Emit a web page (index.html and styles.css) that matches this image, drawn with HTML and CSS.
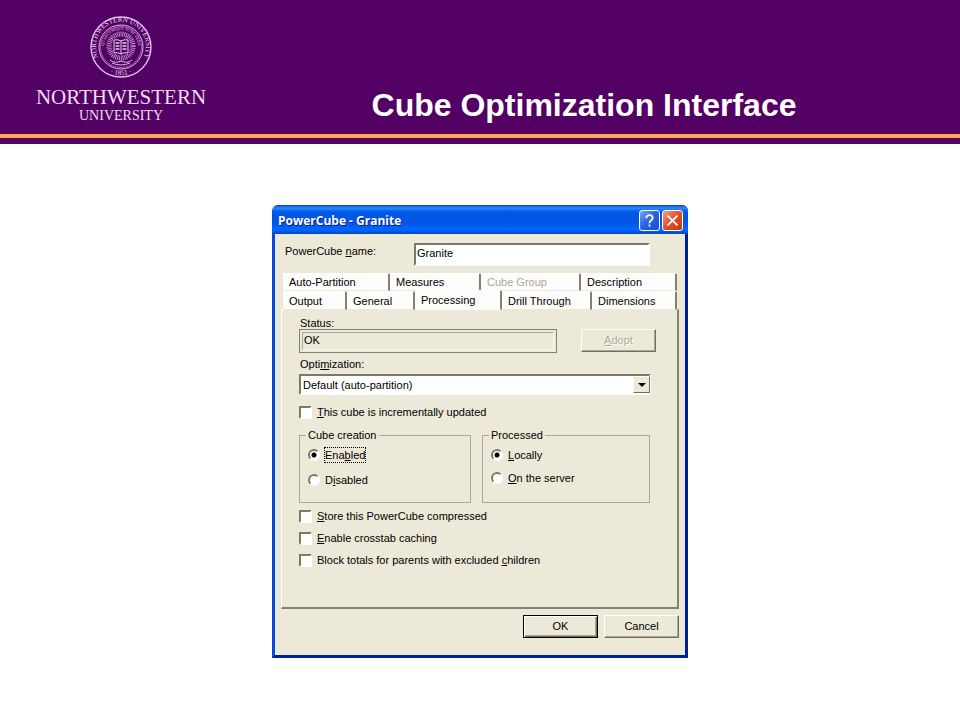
FILE: index.html
```html
<!DOCTYPE html>
<html lang="en">

<head>
  <meta charset="UTF-8">
  <meta name="viewport" content="width=device-width, initial-scale=1.0">
  <title>Cube Optimization Interface</title>
  <link rel="stylesheet" href="styles.css">
</head>

<body>
  <header class="banner">
    <div class="brand">
      <svg class="seal" viewBox="0 0 64 64" aria-hidden="true">
        <defs>
          <path id="ring" d="M14.500 49.500 A25 25 0 1 1 49.500 49.500" />
          <path id="motto" d="M18.500 42 A17 17 0 1 1 45.500 42" />
          <path id="year" d="M18 56.500 A28 28 0 0 0 46 56.500" />
        </defs>
        <g fill="none" stroke="#dcbce4">
          <circle cx="32" cy="32" r="30" stroke-width="1.4" />
          <circle cx="32" cy="32" r="22" />
          <circle cx="32" cy="32" r="20.5" stroke-width=".5" />
          <circle cx="32" cy="31" r="12" stroke-width="5" stroke-dasharray=".9 .9" opacity=".8" />
          <path d="M21 45 q5 4 11 1 q6 3 11 -1 M23 48 q9 4 18 0" />
        </g>
        <path fill="#520063" d="M24 24h16v15H24z" />
        <g stroke="#e6cdec" fill="none">
          <path d="M25 25 q4 -1 7 1 q3 -2 7 -1 v13 q-4 -1 -7 1 q-3 -2 -7 -1 z M32 26v13" />
          <path stroke-width="1.5" d="M26.500 28h4M26.500 31h4M26.500 34h4M33.500 28h4M33.500 31h4M33.500 34h4" />
        </g>
        <g class="seal-text">
          <text text-anchor="middle"><textPath href="#ring" startOffset="50%">NORTHWESTERN UNIVERSITY</textPath></text>
          <text class="seal-motto" text-anchor="middle"><textPath href="#motto" startOffset="50%">QUAECUMQUE SUNT VERA</textPath></text>
          <text text-anchor="middle"><textPath href="#year" startOffset="50%">· 1851 ·</textPath></text>
        </g>
      </svg>
      <div class="brand-name">NORTHWESTERN</div>
      <div class="brand-sub">UNIVERSITY</div>
    </div>
    <h1>Cube Optimization Interface</h1>
  </header>

  <main>
    <form class="dialog" action="#">
      <div class="titlebar">
        <h2>PowerCube - Granite</h2>
        <button type="button" class="caption-btn" aria-label="Help">
          <svg viewBox="0 0 21 21"><path d="M7 8 Q7 4.500 10.500 4.500 Q14 4.500 14 7.500 Q14 9.500 12 10.500 Q10.500 11.500 10.500 13.500 M10.500 15v2" /></svg>
        </button>
        <button type="button" class="caption-btn close" aria-label="Close">
          <svg viewBox="0 0 21 21"><path d="M5 5l11 11M16 5l-11 11" /></svg>
        </button>
      </div>

      <div class="dialog-body">
        <div class="name-row">
          <label for="cubeName">PowerCube <u>n</u>ame:</label>
          <input type="text" id="cubeName" value="Granite">
        </div>

        <div class="tabs tabs-back">
          <button type="button">Auto-Partition</button>
          <button type="button">Measures</button>
          <button type="button" disabled>Cube Group</button>
          <button type="button">Description</button>
        </div>
        <div class="tabs tabs-front">
          <button type="button">Output</button>
          <button type="button">General</button>
          <button type="button" class="active">Processing</button>
          <button type="button">Drill Through</button>
          <button type="button">Dimensions</button>
        </div>

        <section class="panel">
          <label class="caption" for="status">Status:</label>
          <div class="status-row">
            <div class="status-frame"><input type="text" id="status" value="OK" readonly></div>
            <button type="button" class="btn" disabled><u>A</u>dopt</button>
          </div>

          <label class="caption optimization" for="optimization">Opti<u>m</u>ization:</label>
          <div class="select">
            <select id="optimization">
              <option>Default (auto-partition)</option>
            </select>
            <span class="arrow"></span>
          </div>

          <label class="check"><input type="checkbox"><span><u>T</u>his cube is incrementally updated</span></label>

          <div class="groups">
            <fieldset class="creation">
              <legend>Cube creation</legend>
              <label class="check"><input type="radio" name="creation" checked><span class="focused">Ena<u>b</u>led</span></label>
              <label class="check"><input type="radio" name="creation"><span>D<u>i</u>sabled</span></label>
            </fieldset>
            <fieldset class="processed">
              <legend>Processed</legend>
              <label class="check"><input type="radio" name="processed" checked><span><u>L</u>ocally</span></label>
              <label class="check"><input type="radio" name="processed"><span><u>O</u>n the server</span></label>
            </fieldset>
          </div>

          <div class="options">
            <label class="check"><input type="checkbox"><span><u>S</u>tore this PowerCube compressed</span></label>
            <label class="check"><input type="checkbox"><span><u>E</u>nable crosstab caching</span></label>
            <label class="check"><input type="checkbox"><span>Block totals for parents with excluded <u>c</u>hildren</span></label>
          </div>
        </section>

        <div class="actions">
          <button type="submit" class="btn default">OK</button>
          <button type="button" class="btn">Cancel</button>
        </div>
      </div>
    </form>
  </main>
</body>

</html>
```
FILE: styles.css
```css
* {
  box-sizing: border-box;
}

body {
  margin: 0;
  background: #fff;
  font-family: "Liberation Sans", Arial, sans-serif;
}

.banner {
  display: flex;
  height: 144px;
  padding: 15px 0 0 34px;
  background: linear-gradient(#520063 134px, #ffa953 134px, #ffa953 138px, #520063 138px);
  color: #fff;
}

.brand {
  width: 174px;
  text-align: center;
  white-space: nowrap;
  color: #f0dcf4;
  font-family: "Liberation Serif", "Times New Roman", serif;
}

.seal {
  display: block;
  width: 64px;
  height: 64px;
  margin: 0 auto;
}

.seal-text {
  fill: #f0dcf4;
  font-size: 7px;
}

.seal-motto {
  font-size: 4px;
}

.brand-name {
  margin-top: 7px;
  font-size: 21px;
  line-height: 22px;
}

.brand-sub {
  font-size: 14px;
  line-height: 15px;
}

.banner h1 {
  flex: 1;
  margin: 72px 0 0;
  text-align: center;
  font-size: 32px;
  line-height: 36px;
}

main {
  padding: 61px 16px;
}

.dialog {
  max-width: 416px;
  margin: 0 auto;
  border: 3px solid #0a49dc;
  border-top: 0;
  border-right-color: #001ea0;
  border-bottom-color: #001ea0;
  border-radius: 7px 6px 0 0;
  background: #ece9d8;
  color: #000;
  font-size: 11px;
  line-height: 14px;
}

.dialog button,
.dialog input,
.dialog select {
  margin: 0;
  font: inherit;
  color: inherit;
}

.titlebar {
  display: flex;
  align-items: center;
  gap: 2px;
  height: 29px;
  margin: 0 -3px;
  padding: 2px 5px 0 6px;
  border-radius: 6px 6px 0 0;
  background: linear-gradient(#0a3fc0, #2a8bff 3px, #0058e6 7px, #0055e5 17px, #0066ff 25px, #0045c8);
}

.titlebar h2 {
  flex: 1;
  margin: 0;
  color: #fff;
  font-family: "Open Sans", "Trebuchet MS", sans-serif;
  font-size: 12px;
  line-height: 16px;
  text-shadow: 1px 1px 0 #0a1883;
}

.dialog .caption-btn {
  width: 21px;
  height: 21px;
  padding: 0;
  border: 1px solid #fff;
  border-radius: 3px;
  background: linear-gradient(135deg, #7ba4f5, #2a5fdf 50%, #1b4fd0);
}

.dialog .close {
  background: linear-gradient(135deg, #f0a088, #e0502c 50%, #c03a14);
}

.caption-btn svg {
  display: block;
  fill: none;
  stroke: #fff;
  stroke-width: 2;
}

.dialog-body {
  padding: 9px 6px 17px;
}

.name-row {
  display: flex;
  margin-bottom: 7px;
  padding-left: 4px;
}

.name-row label {
  width: 129px;
  line-height: 16px;
}

.name-row input {
  width: 236px;
  height: 23px;
  padding: 0 1px 3px;
  border: 2px solid;
  border-color: #7d7969 #fff #fff #7d7969;
  background: #fff;
}

.tabs {
  display: grid;
  height: 18px;
  margin: 0 2px;
}

.tabs-back {
  grid-template-columns: 107fr 91fr 100fr 96fr;
}

.tabs-front {
  grid-template-columns: 64fr 68fr 87fr 90fr 85fr;
}

.tabs button {
  padding: 0 0 0 5px;
  border: 1px solid #fff;
  border-right: 2px solid #85816f;
  border-bottom-color: #ece9d8;
  border-radius: 2px 2px 0 0;
  background: #fefdfb;
  text-align: left;
  white-space: nowrap;
}

.tabs button:disabled {
  color: #aca899;
}

.tabs .active {
  height: 20px;
  margin-top: -1px;
  border-bottom-color: #fefdfb;
}

.panel {
  padding: 7px 21px 40px 17px;
  border: 1px solid #fff;
  border-right: 2px solid #85816f;
  border-bottom: 2px solid #85816f;
}

.caption {
  display: block;
  padding-left: 1px;
  line-height: 12px;
}

.status-row {
  display: flex;
  justify-content: space-between;
}

.status-frame {
  width: 258px;
  height: 24px;
  padding: 2px;
  border: 1px solid #85816f;
}

.status-frame input {
  display: block;
  width: 100%;
  height: 18px;
  padding: 0 1px 2px;
  border: 1px solid;
  border-color: #aca899 #f8f7f0 #f8f7f0 #aca899;
  background: none;
}

.btn {
  width: 75px;
  height: 23px;
  padding: 0 0 2px;
  border: 1px solid;
  border-color: #fff #716f64 #716f64 #fff;
  background: #ece9d8;
  box-shadow: inset -1px -1px 0 #aca899;
}

.dialog .btn:disabled {
  color: #aca899;
  text-shadow: 1px 1px 0 #fff;
}

.btn.default {
  border-color: #000;
  box-shadow: inset 1px 1px 0 #fff, inset -1px -1px 0 #716f64, inset -2px -2px 0 #aca899;
}

.optimization {
  margin: 5px 0 4px;
}

.select {
  position: relative;
  width: 352px;
  margin-bottom: 10px;
}

.select select {
  display: block;
  width: 100%;
  height: 21px;
  padding: 0 2px;
  border: 2px solid;
  border-color: #7d7969 #fff #fff #7d7969;
  border-radius: 0;
  background: #fff;
  appearance: none;
}

.arrow {
  position: absolute;
  top: 2px;
  right: 1px;
  width: 17px;
  height: 17px;
  border: 1px solid;
  border-color: #fff #716f64 #716f64 #fff;
  background: #ece9d8;
  pointer-events: none;
}

.arrow::after {
  content: "";
  position: absolute;
  top: 6px;
  left: 4px;
  border: 4px solid transparent;
  border-top-color: #000;
  border-bottom: 0;
}

.check {
  display: flex;
  align-items: center;
  gap: 5px;
  height: 14px;
  white-space: nowrap;
}

.check input {
  flex: none;
  width: 13px;
  height: 13px;
  appearance: none;
  border: 2px solid;
  border-color: #7d7969 #fff #fff #7d7969;
  background: #fff;
}

.check input[type="radio"] {
  width: 12px;
  height: 12px;
  border-radius: 50%;
}

.check input[type="radio"]:checked {
  background: radial-gradient(circle, #000 2px, #fff 3px);
}

.focused {
  outline: 1px dotted #000;
}

.groups {
  display: flex;
  gap: 11px;
  margin: 9px 0 6px;
}

fieldset {
  display: flex;
  flex-direction: column;
  gap: 9px;
  height: 75px;
  margin: 0;
  padding: 6px 8px;
  border: 1px solid #aca899;
}

legend {
  padding: 0 2px;
  margin-left: -2px;
}

.creation {
  width: 172px;
  gap: 11px;
}

.processed {
  width: 168px;
}

.options {
  display: grid;
  gap: 8px;
}

.actions {
  display: flex;
  justify-content: flex-end;
  gap: 6px;
  margin-top: 6px;
}
```
